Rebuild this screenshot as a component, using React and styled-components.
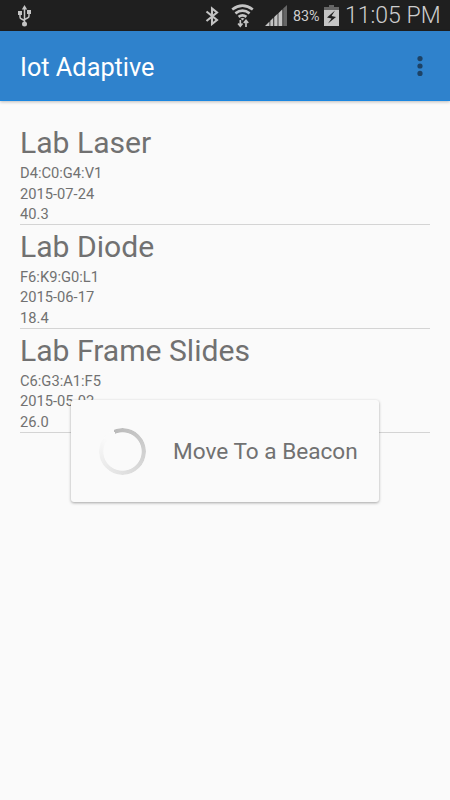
import React from "react";
import styled, { createGlobalStyle } from "styled-components";

const GlobalStyle = createGlobalStyle`
  * {
    box-sizing: border-box;
  }

  body {
    margin: 0;
    background: #fafafa;
    font-family: Roboto, "Noto Sans", sans-serif;
  }
`;

const Screen = styled.div`
  display: flex;
  flex-direction: column;
  position: relative;
  height: 100vh;
  overflow: hidden;
  background: #fafafa;
`;

const StatusBar = styled.div`
  display: flex;
  align-items: center;
  justify-content: space-between;
  height: 31px;
  padding: 0 9px 0 18px;
  background: #1f1f1f;
  color: #cecece;
`;

const StatusIcons = styled.div`
  display: flex;
  align-items: center;
`;

const Icon = styled.svg`
  display: block;
  flex: none;
  margin-right: ${(props) => props.$gap || 0}px;
`;

const BatteryText = styled.span`
  width: 27px;
  margin-right: 4px;
  padding-top: 1px;
  font-size: 14.3px;
  line-height: 31px;
  white-space: nowrap;
`;

const Clock = styled.span`
  width: 96px;
  font-size: 23px;
  font-weight: 300;
  line-height: 31px;
  white-space: nowrap;
`;

const Toolbar = styled.header`
  display: flex;
  align-items: center;
  justify-content: space-between;
  height: 70px;
  padding: 0 27px 0 20px;
  background: #2f82cc;
  border-bottom: 1px solid #1a86e0;
  box-shadow: 0 1px 3px rgba(0, 0, 0, 0.25);
`;

const AppTitle = styled.h1`
  margin: 0;
  padding-top: 4px;
  color: #fff;
  font-size: 25.3px;
  font-weight: 400;
  line-height: 36px;
`;

const MenuButton = styled.button`
  display: flex;
  padding: 0;
  border: none;
  background: none;
`;

const BeaconList = styled.ul`
  margin: 0;
  padding: 20px 20px 0;
  list-style: none;
`;

const BeaconItem = styled.li`
  height: 103.9px;
  padding-top: 1px;
  border-bottom: 1px solid #d4d4d4;
  color: #717171;
`;

const BeaconName = styled.h2`
  margin: 0;
  font-size: 30.1px;
  font-weight: 400;
  line-height: 41px;
`;

const BeaconInfo = styled.p`
  margin: 0;
  font-size: 14.7px;
  line-height: 20.6px;
`;

const Dialog = styled.div`
  display: flex;
  align-items: center;
  position: absolute;
  top: 400px;
  left: 71px;
  width: 308px;
  height: 102px;
  padding-left: 28px;
  border-radius: 3px;
  background: #fafafa;
  box-shadow: 0 1px 3px rgba(0, 0, 0, 0.35);
`;

const Spinner = styled.div`
  width: 47px;
  height: 47px;
  margin-right: 27px;
  border-radius: 50%;
  background: conic-gradient(from -22deg, #bababa, #fafafa 330deg);
  mask: radial-gradient(circle, transparent 18.8px, #000 19.6px);
`;

const DialogText = styled.span`
  padding-top: 1px;
  color: #717171;
  font-size: 22.6px;
  white-space: nowrap;
`;

const beacons = [
  { name: "Lab Laser", id: "D4:C0:G4:V1", date: "2015-07-24", value: "40.3" },
  { name: "Lab Diode", id: "F6:K9:G0:L1", date: "2015-06-17", value: "18.4" },
  { name: "Lab Frame Slides", id: "C6:G3:A1:F5", date: "2015-05-02", value: "26.0" },
];

const UsbIcon = () => (
  <Icon width="13" height="22" viewBox="0 0 13 22" fill="none" stroke="#c4c4c4" strokeWidth="1.5">
    <path d="M6.5 3v15M2 8v4q0 1.5 1.5 2l3 1.5M11 7v4q0 1.5-1.5 2l-3 1.5" />
    <path d="M6.5 0l2.7 4.5h-5.4zM0 6h4v4h-4zM9 5h4v4h-4z" fill="#c4c4c4" stroke="none" />
    <circle cx="6.5" cy="19" r="2.5" fill="#c4c4c4" stroke="none" />
  </Icon>
);

const BluetoothIcon = () => (
  <Icon $gap="12" width="14" height="20" viewBox="0 0 14 20" fill="none" stroke="#c4c4c4" strokeWidth="2.1">
    <path d="M1.5 5.5l10.5 8.5-5 4V2.5l5 4-10.5 8.5" />
  </Icon>
);

const WifiIcon = () => (
  <Icon $gap="11" width="23" height="24" viewBox="0 0 23 24" fill="none" stroke="#c4c4c4" strokeWidth="2.7">
    <path d="M1.2 5.5q10.3-7.6 20.6 0M4.4 9.3q7.1-5.2 14.2 0M7.6 12.8q3.9-2.8 7.8 0" />
    <path d="M9.5 14.5q2-1 4 0l-2 2z" fill="#c4c4c4" stroke="none" />
    <path d="M9.3 16v6M7.1 19.5l2.2 2.7 2.2-2.7M15 23v-6M12.8 19l2.2-2.7 2.2 2.7" strokeWidth="1.7" />
  </Icon>
);

const SignalIcon = () => (
  <Icon $gap="6" width="22" height="21" viewBox="0 0 22 21" fill="#c4c4c4">
    <path d="M0 21l4.5-4.5V21zM5.3 21v-5.3l3-3V21zM9.2 21v-9l3.4-3.3V21zM13.4 21V8.2l4-4V21z" />
    <path d="M18.2 21V3.5L22 0v21z" fill="#666" />
  </Icon>
);

const BatteryIcon = () => (
  <Icon $gap="6" width="15" height="21" viewBox="0 0 15 21">
    <path d="M5 0h5v2h5v3H0V2h5z" fill="#666" />
    <path d="M0 5h15v16H0z" fill="#c4c4c4" />
    <path d="M11 5.5L3 12.5l4.5 1L4 18.5l8-6.5-4.5-1z" fill="#1f1f1f" />
  </Icon>
);

const App = () => {
  return (
    <Screen>
      <GlobalStyle />
      <StatusBar>
        <UsbIcon />
        <StatusIcons>
          <BluetoothIcon />
          <WifiIcon />
          <SignalIcon />
          <BatteryText>83%</BatteryText>
          <BatteryIcon />
          <Clock>11:05 PM</Clock>
        </StatusIcons>
      </StatusBar>
      <Toolbar>
        <AppTitle>Iot Adaptive</AppTitle>
        <MenuButton aria-label="More options">
          <Icon width="6" height="20" viewBox="0 0 6 20" fill="#1d4265">
            <circle cx="3" cy="2.6" r="2.6" />
            <circle cx="3" cy="10" r="2.6" />
            <circle cx="3" cy="17.4" r="2.6" />
          </Icon>
        </MenuButton>
      </Toolbar>
      <BeaconList>
        {beacons.map((beacon) => (
          <BeaconItem key={beacon.id}>
            <BeaconName>{beacon.name}</BeaconName>
            <BeaconInfo>{beacon.id}</BeaconInfo>
            <BeaconInfo>{beacon.date}</BeaconInfo>
            <BeaconInfo>{beacon.value}</BeaconInfo>
          </BeaconItem>
        ))}
      </BeaconList>
      <Dialog role="dialog">
        <Spinner />
        <DialogText>Move To a Beacon</DialogText>
      </Dialog>
    </Screen>
  );
};

export default App;
